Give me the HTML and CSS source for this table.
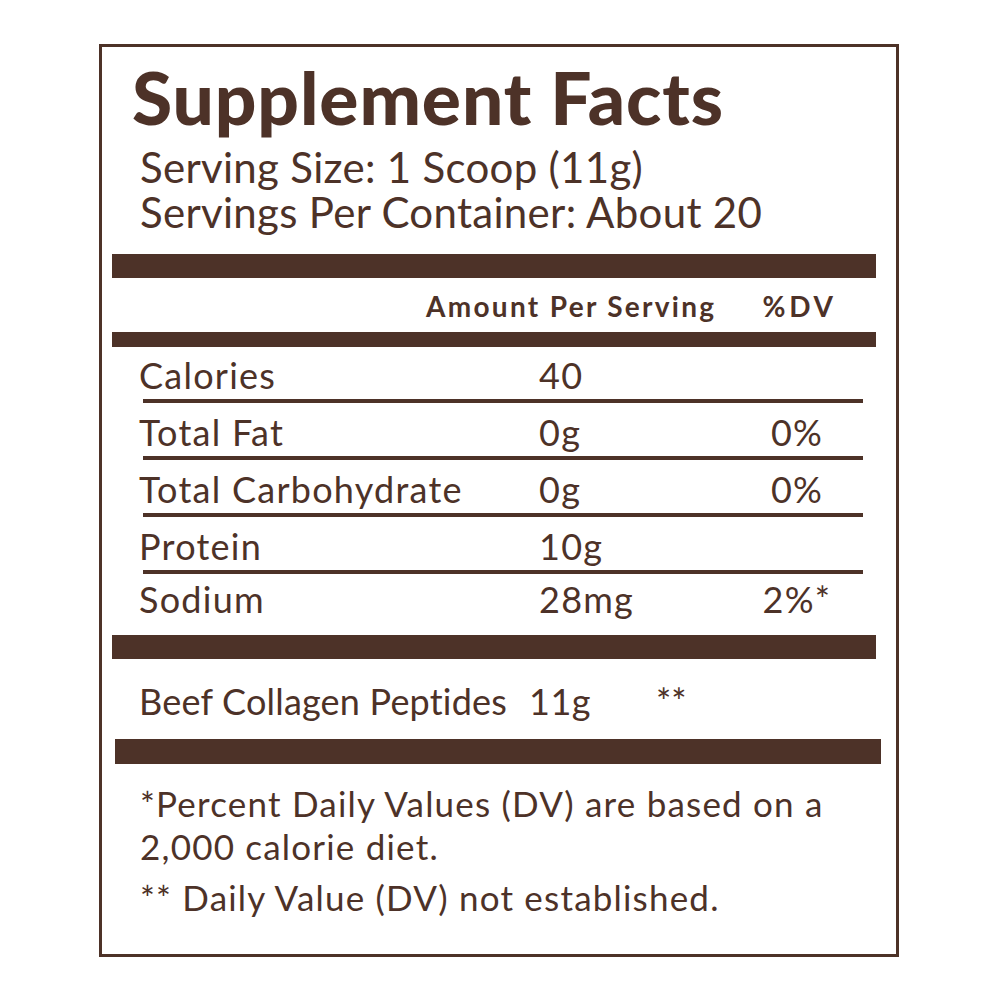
FILE: index.html
```html
<!DOCTYPE html>
<html lang="en">
<head>
<meta charset="utf-8">
<title>Supplement Facts</title>
<link rel="stylesheet" href="styles.css">
</head>
<body>
<div class="label">
  <h1 class="title">Supplement Facts</h1>
  <div class="serving">
    <div class="serving-line">Serving Size: 1 Scoop (11g)</div>
    <div class="serving-line">Servings Per Container: About 20</div>
  </div>
  <div class="bar bar-a"></div>
  <div class="head">
    <span class="head-amount">Amount Per Serving</span><span class="head-dv">%DV</span>
  </div>
  <div class="bar bar-b"></div>
  <div class="rows">
    <div class="row first"><span class="name">Calories</span><span class="amt">40</span><span class="dv"></span></div>
    <div class="row"><span class="name">Total Fat</span><span class="amt">0g</span><span class="dv">0%</span></div>
    <div class="row"><span class="name">Total Carbohydrate</span><span class="amt">0g</span><span class="dv">0%</span></div>
    <div class="row"><span class="name">Protein</span><span class="amt">10g</span><span class="dv"></span></div>
    <div class="row last"><span class="name">Sodium</span><span class="amt">28mg</span><span class="dv">2%*</span></div>
  </div>
  <div class="bar bar-a"></div>
  <div class="collagen">
    <span class="c-name">Beef Collagen Peptides</span><span class="c-amt">11g</span><span class="c-dv">**</span>
  </div>
  <div class="bar bar-c"></div>
  <div class="notes">
    <p class="note">*Percent Daily Values (DV) are based on a<br>2,000 calorie diet.</p>
    <p class="note note-2">** Daily Value (DV) not established.</p>
  </div>
</div>
</body>
</html>
```
FILE: styles.css
```css
html, body {
  margin: 0;
  padding: 0;
  background: #ffffff;
}

body {
  font-family: Lato, "Open Sans", sans-serif;
  color: #4d3228;
}

.label {
  box-sizing: border-box;
  margin: 44px 0 0 99px;
  width: 800px;
  height: 913px;
  border: 3px solid #4d3228;
  padding-top: 11px;
}

.title {
  margin: 0 0 0 30px;
  font-size: 73px;
  font-weight: 900;
  line-height: 78px;
  letter-spacing: 0.9px;
  white-space: nowrap;
}

.serving {
  margin: 9px 0 0 38px;
  font-size: 42px;
  letter-spacing: 0.3px;
  white-space: nowrap;
}

.serving-line {
  height: 45px;
  line-height: 45px;
}

.bar {
  background: #4d3228;
}

.bar-a {
  margin: 0 0 0 10px;
  width: 764px;
  height: 24px;
}

.serving + .bar-a {
  margin-top: 19px;
}

.bar-b {
  margin-left: 10px;
  width: 764px;
  height: 15px;
}

.bar-c {
  margin-left: 13px;
  width: 766px;
  height: 25px;
}

.head {
  height: 54px;
  box-sizing: border-box;
  padding: 2px 0 0 324px;
  font-size: 28px;
  font-weight: 700;
  line-height: 52px;
  letter-spacing: 2.3px;
  white-space: nowrap;
}

.head-dv {
  margin-left: 46px;
  letter-spacing: 3.8px;
}

.rows {
  margin-left: 41px;
  width: 720px;
}

.row {
  display: grid;
  grid-template-columns: 396px 192px 132px;
  box-sizing: border-box;
  height: 57px;
  padding-top: 6px;
  border-bottom: 4px solid #4d3228;
  font-size: 36px;
  line-height: 47px;
  letter-spacing: 1.25px;
  white-space: nowrap;
}

.row.first {
  height: 56px;
  padding-top: 5px;
}

.row.last {
  height: 61px;
  padding-top: 2px;
  border-bottom: 0;
}

.name {
  margin-left: -4px;
}

.amt {
  margin-left: 0;
}

.dv {
  text-align: center;
}

.collagen {
  display: grid;
  grid-template-columns: 390px 127px auto;
  box-sizing: border-box;
  height: 80px;
  padding: 5px 0 0 37px;
  font-size: 36px;
  line-height: 75px;
  letter-spacing: 0.2px;
  white-space: nowrap;
}

.c-amt {
  letter-spacing: 0.5px;
}

.c-dv {
  letter-spacing: 0;
}

.notes {
  padding: 18px 0 0 38px;
  font-size: 35px;
  line-height: 43px;
  letter-spacing: 1.2px;
  white-space: nowrap;
}

.note {
  margin: 0;
}

.note-2 {
  margin-top: 8px;
}
```
